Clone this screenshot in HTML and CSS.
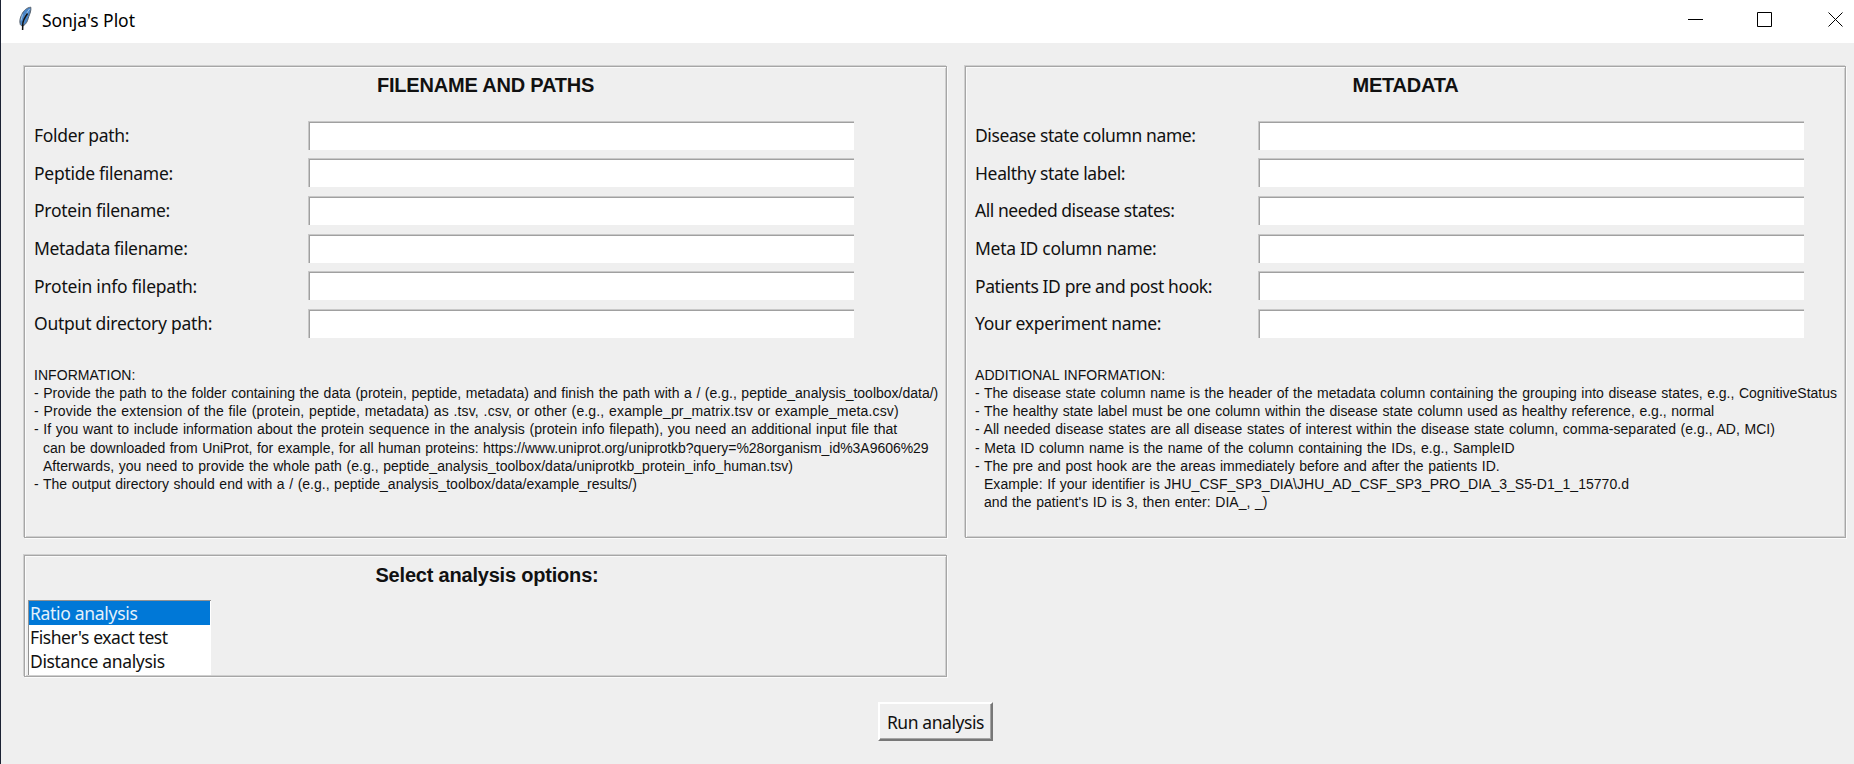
FILE: index.html
```html
<!DOCTYPE html>
<html lang="en">
<head>
<meta charset="utf-8">
<title>Sonja's Plot</title>
<link rel="stylesheet" href="styles.css">
</head>
<body>
<div class="window">
  <header class="titlebar">
    <svg class="feather" width="14" height="25" viewBox="0 0 14 25"><path d="M12.800 1.200C9 1.500 5.500 4.500 3.800 8.500C2 12 1.300 15 2.300 18.500L4.300 20.500L7 18.500C9.500 16 9.800 13.500 10.800 10.500C12 7.500 13.300 4.500 12.800 1.200Z" fill="#4a86c8" stroke="#59636e"/><path d="M11.500 3C8.500 7 6 12 5 18M4.500 8.500L3 14.500" fill="none" stroke="#9cc3ea"/><path d="M9.500 7.500C7 11 5 15 4.800 18L4.600 24" fill="none" stroke="#111" stroke-width="1.500"/></svg>
    <span class="title">Sonja's Plot</span>
    <svg class="controls" width="160" height="17" viewBox="0 0 160 17"><path d="M0 7.500H15M69.500 .5H83.500V14.500H69.500ZM140.500 .5L154.500 14.500M154.500 .5L140.500 14.500" fill="none" stroke="#000"/></svg>
  </header>
  <main class="content">
    <section class="panel files">
      <h2>FILENAME AND PATHS</h2>
      <div class="form">
        <label class="folder">Folder path:</label><input type="text">
        <label class="peptide">Peptide filename:</label><input type="text">
        <label class="protein">Protein filename:</label><input type="text">
        <label class="metadata">Metadata filename:</label><input type="text">
        <label class="protein-info">Protein info filepath:</label><input type="text">
        <label class="output">Output directory path:</label><input type="text">
      </div>
      <div class="info">
        <p class="track-5">INFORMATION:</p>
        <p>- Provide the path to the folder containing the data (protein, peptide, metadata) and finish the path with a / (e.g., peptide_analysis_toolbox/data/)</p>
        <p class="track-14">- Provide the extension of the file (protein, peptide, metadata) as .tsv, .csv, or other (e.g., example_pr_matrix.tsv or example_meta.csv)</p>
        <p class="track-3">- If you want to include information about the protein sequence in the analysis (protein info filepath), you need an additional input file that</p>
        <p class="indent tight">can be downloaded from UniProt, for example, for all human proteins: https://www.uniprot.org/uniprotkb?query=%28organism_id%3A9606%29</p>
        <p class="indent track-3">Afterwards, you need to provide the whole path (e.g., peptide_analysis_toolbox/data/uniprotkb_protein_info_human.tsv)</p>
        <p>- The output directory should end with a / (e.g., peptide_analysis_toolbox/data/example_results/)</p>
      </div>
    </section>
    <section class="panel meta">
      <h2>METADATA</h2>
      <div class="form">
        <label class="disease">Disease state column name:</label><input type="text">
        <label class="healthy">Healthy state label:</label><input type="text">
        <label class="states">All needed disease states:</label><input type="text">
        <label class="meta-id">Meta ID column name:</label><input type="text">
        <label class="patients">Patients ID pre and post hook:</label><input type="text">
        <label class="experiment">Your experiment name:</label><input type="text">
      </div>
      <div class="info">
        <p class="track-5">ADDITIONAL INFORMATION:</p>
        <p>- The disease state column name is the header of the metadata column containing the grouping into disease states, e.g., CognitiveStatus</p>
        <p class="track-1">- The healthy state label must be one column within the disease state column used as healthy reference, e.g., normal</p>
        <p class="track-2">- All needed disease states are all disease states of interest within the disease state column, comma-separated (e.g., AD, MCI)</p>
        <p class="track-4">- Meta ID column name is the name of the column containing the IDs, e.g., SampleID</p>
        <p>- The pre and post hook are the areas immediately before and after the patients ID.</p>
        <p class="indent track-3">Example: If your identifier is JHU_CSF_SP3_DIA\JHU_AD_CSF_SP3_PRO_DIA_3_S5-D1_1_15770.d</p>
        <p class="indent track-3">and the patient's ID is 3, then enter: DIA_, _)</p>
      </div>
    </section>
    <section class="panel options">
      <h2>Select analysis options:</h2>
      <ul class="listbox">
        <li class="selected">Ratio analysis</li>
        <li class="fisher">Fisher's exact test</li>
        <li class="distance">Distance analysis</li>
      </ul>
    </section>
  </main>
  <footer class="actions"><button type="button">Run analysis</button></footer>
</div>
</body>
</html>
```
FILE: styles.css
```css
* { box-sizing: border-box; }

body {
  margin: 0;
  background: #efefef;
  color: #111;
  font-family: "Noto Sans", sans-serif;
  font-size: 17.5px;
}

h2, p, ul { margin: 0; padding: 0; }

.window {
  width: 1854px;
  height: 764px;
  overflow: hidden;
  border-left: 1px solid #1b2233;
}

.titlebar {
  display: flex;
  height: 43px;
  padding: 6px 6px 0 17px;
  background: #fff;
  color: #000;
}

.title {
  margin-left: 10px;
  line-height: 28px;
  letter-spacing: -.05px;
}

.controls { margin: 6px 0 0 auto; }

.content {
  display: grid;
  grid-template-columns: 923px 881px;
  grid-template-rows: 472px 122px;
  gap: 17px 18px;
  padding: 23px 0 0 23px;
}

.panel {
  border: 1px solid #a6a6a6;
  box-shadow: inset 1px 1px 0 #fbfbfb, inset -1px -1px 0 #cfcfcf, 1px 1px 0 #fbfbfb, -1px -1px 0 #cfcfcf;
}

h2 {
  height: 36px;
  padding-top: 5px;
  font: bold 20px/26px "Liberation Sans", Arial, sans-serif;
  letter-spacing: -.2px;
  text-align: center;
}

.options h2 { padding: 6px 0 0 3px; }

.form {
  display: grid;
  grid-template-columns: 274px 546px;
  grid-auto-rows: 37.55px;
  align-items: center;
  padding: 13.6px 0 0 9px;
}

.meta .form { grid-template-columns: 283px 546px; }

label {
  line-height: 26px;
  white-space: nowrap;
}

.folder { letter-spacing: -.33px; }
.peptide { letter-spacing: -.28px; }
.protein { letter-spacing: -.27px; }
.metadata { letter-spacing: -.34px; }
.protein-info { letter-spacing: -.22px; }
.output { letter-spacing: -.25px; }
.disease { letter-spacing: -.4px; }
.healthy { letter-spacing: -.35px; }
.states { letter-spacing: -.45px; }
.meta-id { letter-spacing: -.29px; }
.patients { letter-spacing: -.4px; }
.experiment { letter-spacing: -.32px; }

input {
  width: 546px;
  height: 29px;
  padding: 0;
  background: #fff;
  border: solid #c8c8c8;
  border-width: 1px 0 0 1px;
  box-shadow: inset 1px 1px 0 #a0a0a0;
}

.info {
  padding: 24.4px 0 0 9px;
  font: 14px/18.06px "Liberation Sans", Arial, sans-serif;
  word-spacing: .7px;
  white-space: nowrap;
}

.indent { padding-left: 9px; }

.tight { letter-spacing: -.038px; }
.track-1 { letter-spacing: .014px; }
.track-2 { letter-spacing: .024px; }
.track-3 { letter-spacing: .03px; }
.track-4 { letter-spacing: .039px; }
.track-5 { letter-spacing: .05px; }
.track-14 { letter-spacing: .14px; }

.listbox {
  width: 183px;
  height: 75px;
  margin: 8px 0 0 3px;
  border: solid #929292;
  border-width: 1px 0 0 1px;
  background: #fff;
  list-style: none;
}

li {
  height: 24px;
  padding-left: 1px;
  line-height: 24px;
}

.selected {
  margin-right: 1px;
  background: #0078d7;
  color: #e4f1fb;
  letter-spacing: -.31px;
}

.fisher { letter-spacing: -.42px; }
.distance { letter-spacing: -.35px; }

.actions {
  display: flex;
  padding: 25px 0 0 877px;
}

button {
  width: 115px;
  height: 39px;
  padding: 0;
  background: #efefef;
  border: 2px solid;
  border-color: #fff #777 #777 #fff;
  box-shadow: inset -1px -1px 0 #a5a5a5;
  color: #111;
  font: inherit;
  letter-spacing: -.42px;
}
```
